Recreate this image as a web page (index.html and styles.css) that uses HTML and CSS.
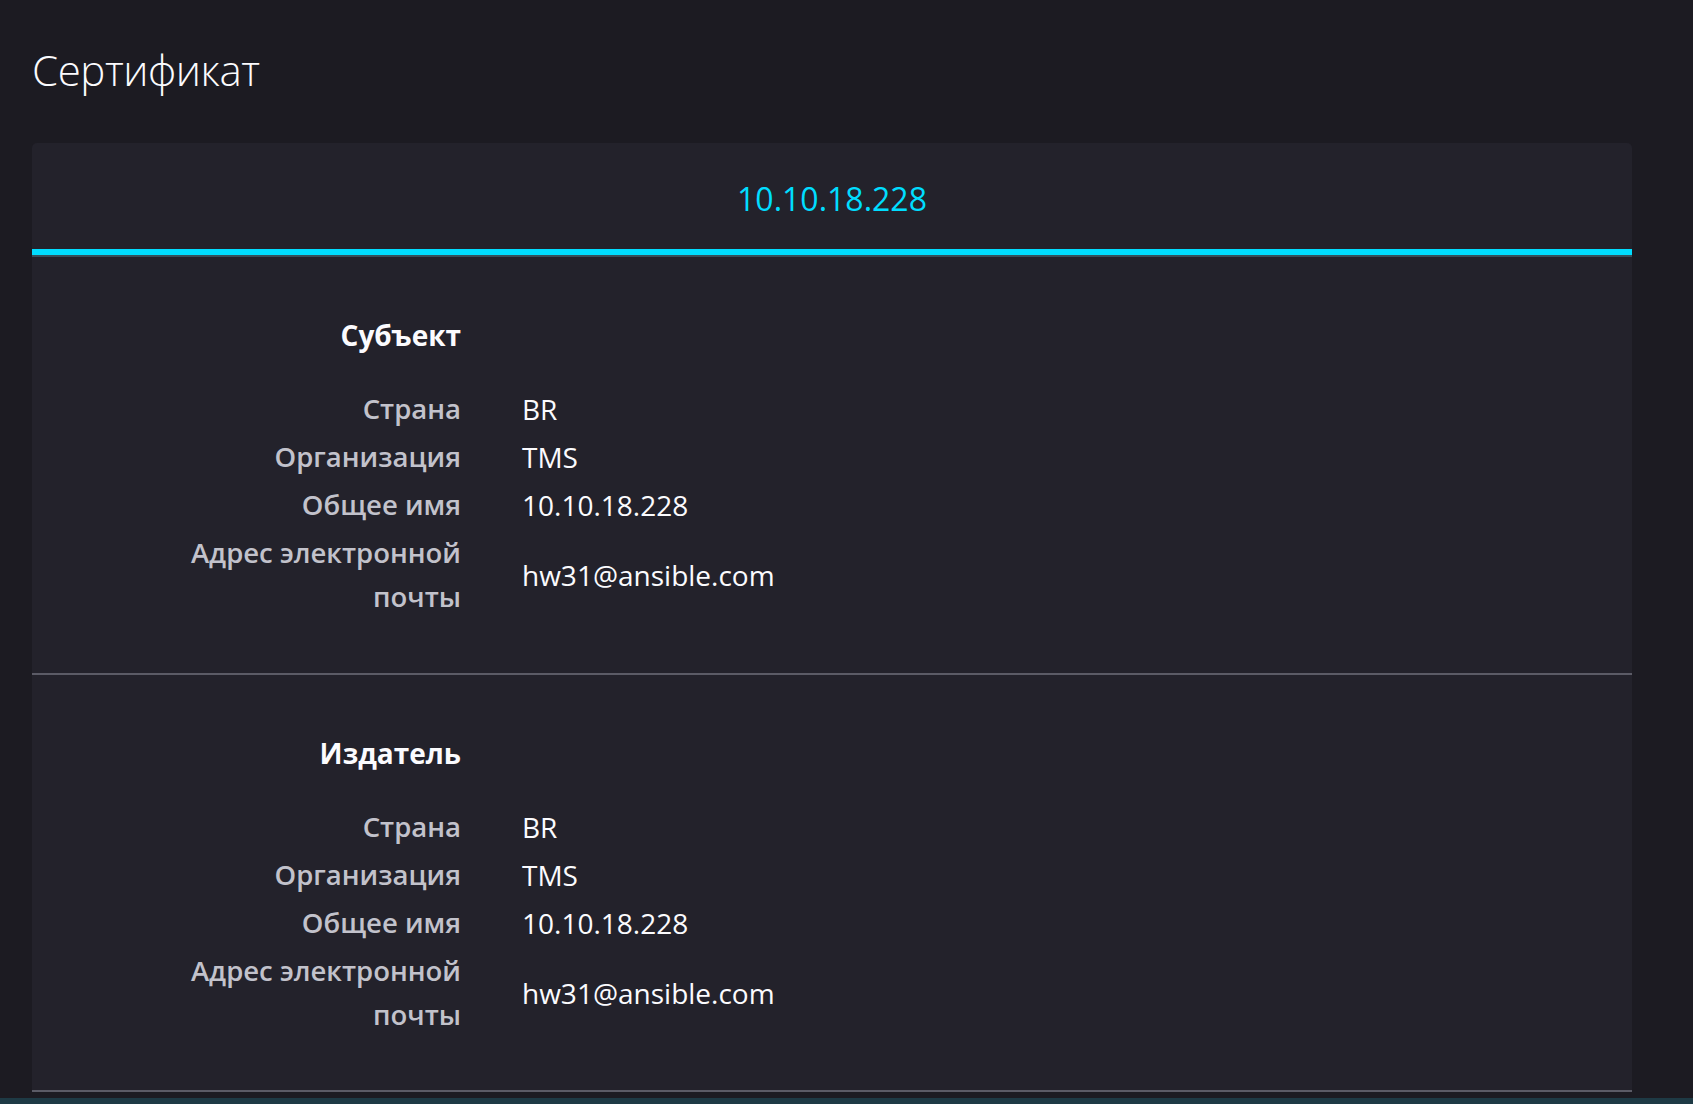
FILE: index.html
```html
<!DOCTYPE html>
<html lang="ru">
<head>
<meta charset="utf-8">
<title>Сертификат</title>
<link rel="stylesheet" href="styles.css">
</head>
<body>
<main class="page">
  <h1 class="title">Сертификат</h1>
  <section class="card">
    <div class="tab-header">
      <span class="tab-name">10.10.18.228</span>
    </div>
    <div class="section">
      <div class="grid">
        <div class="heading">Субъект</div>
        <div class="heading-spacer"></div>
        <div class="label">Страна</div>
        <div class="value">BR</div>
        <div class="label">Организация</div>
        <div class="value">TMS</div>
        <div class="label">Общее имя</div>
        <div class="value">10.10.18.228</div>
        <div class="label">Адрес электронной почты</div>
        <div class="value">hw31@ansible.com</div>
      </div>
    </div>
    <div class="section">
      <div class="grid">
        <div class="heading">Издатель</div>
        <div class="heading-spacer"></div>
        <div class="label">Страна</div>
        <div class="value">BR</div>
        <div class="label">Организация</div>
        <div class="value">TMS</div>
        <div class="label">Общее имя</div>
        <div class="value">10.10.18.228</div>
        <div class="label">Адрес электронной почты</div>
        <div class="value">hw31@ansible.com</div>
      </div>
    </div>
  </section>
</main>
<div class="bottom-strip"></div>
</body>
</html>
```

FILE: styles.css
```css
html, body {
  margin: 0;
  padding: 0;
  background: #1c1b22;
  height: 100%;
  overflow: hidden;
}

body {
  font-family: "Open Sans", "Noto Sans", sans-serif;
  color: #fbfbfe;
}

.page {
  padding: 0 61px 0 32px;
}

.title {
  margin: 49px 0 0 0;
  font-size: 42px;
  line-height: 42px;
  font-weight: 300;
  letter-spacing: -0.4px;
  color: #fbfbfe;
}

.card {
  margin-top: 52px;
  background: #23222b;
  border-radius: 5px 5px 0 0;
  width: 1600px;
}

.tab-header {
  height: 100px;
  padding-top: 6px;
  box-sizing: content-box;
  display: flex;
  align-items: center;
  justify-content: center;
  border-bottom: 6px solid #00ddff;
}

.tab-name {
  font-size: 32px;
  line-height: 44px;
  color: #00ddff;
}

.section {
  border-top: 2px solid #35505a;
  padding: 56px 0 54px 0;
}

.section + .section {
  border-top: 2px solid #5b5b66;
}

.section:last-child {
  border-bottom: 2px solid #5b5b66;
  padding-bottom: 53px;
}

.grid {
  display: grid;
  grid-template-columns: 429px 1fr;
  column-gap: 61px;
  row-gap: 4px;
  font-size: 28px;
  line-height: 44px;
}

.heading {
  text-align: right;
  font-weight: 700;
  color: #fbfbfe;
  margin-bottom: 26px;
}

.label {
  text-align: right;
  color: #c2c2cb;
  font-weight: 600;
  font-size: 27.5px;
  padding-left: 120px;
}

.value {
  display: flex;
  align-items: center;
  color: #fbfbfe;
}

.bottom-strip {
  position: fixed;
  left: 0;
  right: 0;
  bottom: 0;
  height: 6px;
  background: #1e3a45;
}
```
